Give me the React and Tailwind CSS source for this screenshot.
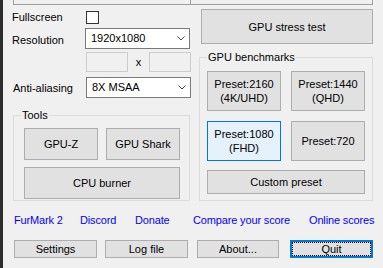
import React from 'react';

const Chevron = () => (
  <svg width="8" height="5" viewBox="0 0 8 5" className="shrink-0">
    <path d="M0.5 0.5 L4 4 L7.5 0.5" fill="none" stroke="#444" strokeWidth="1" />
  </svg>
);

function Combo({ value }) {
  return (
    <div className="w-[105px] h-[21px] bg-white border border-[#7a7a7a] flex items-center justify-between pl-[5px] pr-[4px]">
      <span>{value}</span>
      <Chevron />
    </div>
  );
}

function Btn({ className = '', children }) {
  return (
    <div className={`bg-[#e1e1e1] border border-[#adadad] flex flex-col items-center justify-center text-center leading-[14px] ${className}`}>
      {children}
    </div>
  );
}

function Group({ title, className = '', children }) {
  return (
    <div className={`relative border border-[#dcdcdc] ${className}`}>
      <span className="absolute left-[7px] top-[-8px] bg-[#f0f0f0] px-px leading-[14px]">{title}</span>
      {children}
    </div>
  );
}

export default function App() {
  return (
    <div className="w-[383px] h-[268px] bg-[#f0f0f0] flex overflow-hidden text-[11px] text-black font-['Liberation_Sans',Arial,sans-serif]">
      <div className="w-[3px] shrink-0 bg-[#2d2d2d]" />
      <div className="flex-1 flex flex-col">
        <div className="flex">
          {/* left column */}
          <div className="ml-[10px] w-[178px] flex flex-col">
            <div className="h-[5px] border-x border-b border-[#a0a0a0]" />
            <div className="mt-[6px] h-[13px] flex items-center">
              <span className="w-[74px] -ml-px">Fullscreen</span>
              <div className="w-[13px] h-[13px] bg-white border border-[#333]" />
            </div>
            <div className="mt-[4px] h-[21px] flex items-center">
              <span className="w-[73px] -ml-px pt-[3px]">Resolution</span>
              <Combo value="1920x1080" />
            </div>
            <div className="mt-[3px] h-[20px] flex items-center pl-[73px]">
              <div className="w-[42px] h-[20px] border border-[#cccccc] bg-[#f0f0f0]" />
              <span className="w-[21px] text-center">x</span>
              <div className="w-[42px] h-[20px] border border-[#cccccc] bg-[#f0f0f0]" />
            </div>
            <div className="mt-[5px] h-[21px] flex items-center">
              <span className="w-[73px] pt-px">Anti-aliasing</span>
              <Combo value="8X MSAA" />
            </div>
            <Group title="Tools" className="mt-[17px] w-[177px] h-[86px] pl-[10px] pt-[12px]">
              <div className="flex gap-[8px]">
                <Btn className="w-[74px] h-[32px]">GPU-Z</Btn>
                <Btn className="w-[74px] h-[32px]">GPU Shark</Btn>
              </div>
              <Btn className="mt-[7px] w-[156px] h-[32px]">CPU burner</Btn>
            </Group>
          </div>

          {/* right column */}
          <div className="w-[182px] flex flex-col">
            <div className="h-[5px] border-r border-b border-[#a0a0a0]" />
            <Btn className="mt-[4px] ml-[10px] w-[172px] h-[35px]">GPU stress test</Btn>
            <Group title="GPU benchmarks" className="mt-[13px] ml-[8px] w-[174px] h-[144px] pl-[7px] pt-[13px]">
              <div className="flex gap-[10px]">
                <Btn className="w-[74px] h-[40px]">
                  <span>Preset:2160</span>
                  <span>(4K/UHD)</span>
                </Btn>
                <Btn className="w-[74px] h-[40px]">
                  <span>Preset:1440</span>
                  <span>(QHD)</span>
                </Btn>
              </div>
              <div className="mt-[10px] flex gap-[10px]">
                <Btn className="w-[74px] h-[40px] !bg-[#e5f1fb] !border-[#0078d7]">
                  <span>Preset:1080</span>
                  <span>(FHD)</span>
                </Btn>
                <Btn className="w-[74px] h-[40px]">Preset:720</Btn>
              </div>
              <Btn className="mt-[9px] w-[158px] h-[24px]">Custom preset</Btn>
            </Group>
          </div>
        </div>

        {/* links */}
        <div className="mt-[12px] h-[14px] flex items-center leading-[14px] text-[#0000ff] tracking-[-0.15px]">
          <span className="ml-[11px] w-[66px]">FurMark 2</span>
          <span className="w-[55px]">Discord</span>
          <span className="w-[58px]">Donate</span>
          <span className="w-[116px]">Compare your score</span>
          <span>Online scores</span>
        </div>

        {/* bottom buttons */}
        <div className="mt-[13px] h-[18px] flex">
          <Btn className="ml-[11px] w-[83px] h-[18px]">Settings</Btn>
          <Btn className="ml-[8px] w-[83px] h-[18px]">Log file</Btn>
          <Btn className="ml-[9px] w-[82px] h-[18px]">About...</Btn>
          <div className="relative ml-[11px] w-[83px] h-[18px] bg-[#e1e1e1] border-2 border-[#0078d7] flex items-center justify-center">
            <span className="absolute inset-0 border border-dotted border-black" />
            <span className="relative">Quit</span>
          </div>
        </div>
      </div>
    </div>
  );
}
